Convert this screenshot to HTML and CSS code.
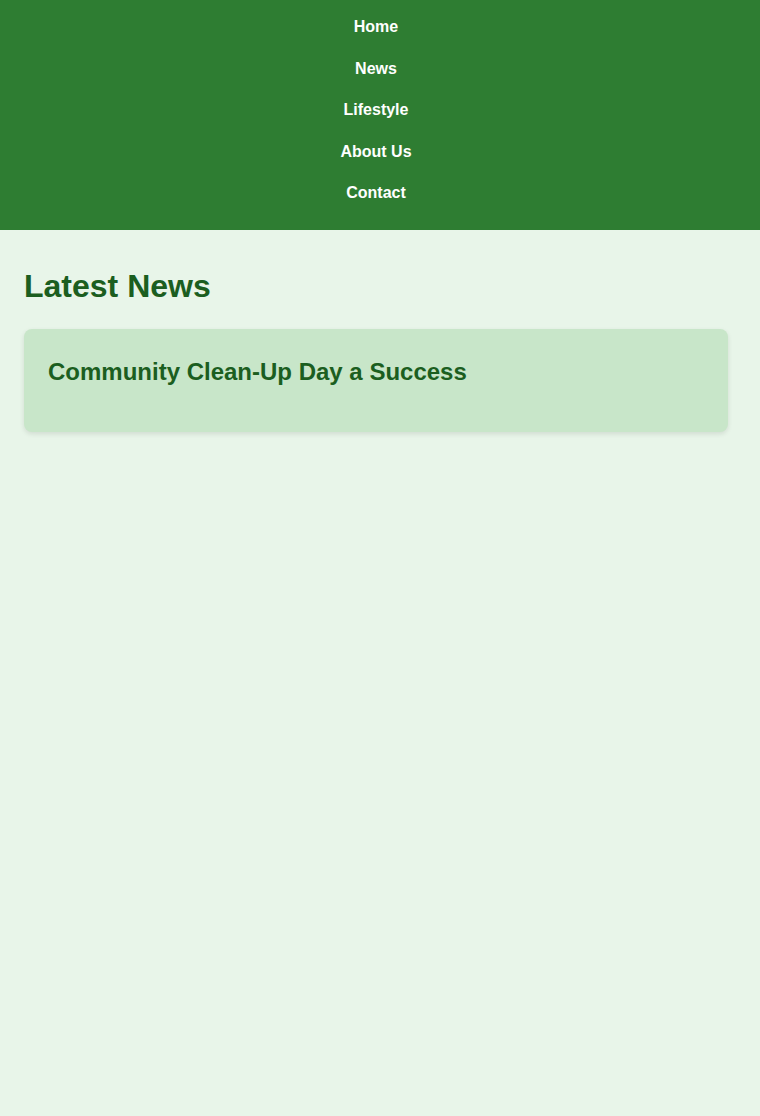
FILE: index.html
```html
<!DOCTYPE html>
<html lang="en">
<head>
<meta charset="utf-8">
<title>Latest News</title>
<link rel="stylesheet" href="styles.css">
</head>
<body>
<header class="site-header">
  <nav>
    <ul class="nav-list">
      <li><a href="#">Home</a></li>
      <li><a href="#">News</a></li>
      <li><a href="#">Lifestyle</a></li>
      <li><a href="#">About Us</a></li>
      <li><a href="#">Contact</a></li>
    </ul>
  </nav>
</header>
<main class="content">
  <h2 class="section-title">Latest News</h2>
  <article class="card">
    <h3 class="card-title">Community Clean-Up Day a Success</h3>
  </article>
</main>
</body>
</html>
```
FILE: styles.css
```css
* { box-sizing: border-box; }
html, body { margin: 0; padding: 0; }
body {
  background: #e8f5e9;
  font-family: "Liberation Sans", Arial, sans-serif;
  color: #1b5e20;
  min-height: 1116px;
}
.site-header {
  background: #2e7d32;
  height: 230px;
  padding-top: 18px;
}
.nav-list {
  list-style: none;
  margin: 0;
  padding: 0 8px 0 0;
  display: flex;
  flex-direction: column;
  align-items: center;
  gap: 23.1px;
}
.nav-list li { line-height: 18.4px; }
.nav-list a {
  color: #ffffff;
  text-decoration: none;
  font-weight: bold;
  font-size: 16px;
}
.content {
  padding: 38px 24px 24px 24px;
}
.section-title {
  margin: 0 0 24.2px 0;
  font-size: 32px;
  line-height: 36.8px;
  font-weight: bold;
  color: #1b5e20;
}
.card {
  background: #c8e6c9;
  border-radius: 8px;
  box-shadow: 0 2px 5px rgba(0, 0, 0, 0.1);
  padding: 29.5px 24px 18px 24px;
  width: 704px;
  height: 103px;
}
.card-title {
  margin: 0;
  font-size: 24px;
  line-height: 27.6px;
  font-weight: bold;
  color: #1b5e20;
}
```
